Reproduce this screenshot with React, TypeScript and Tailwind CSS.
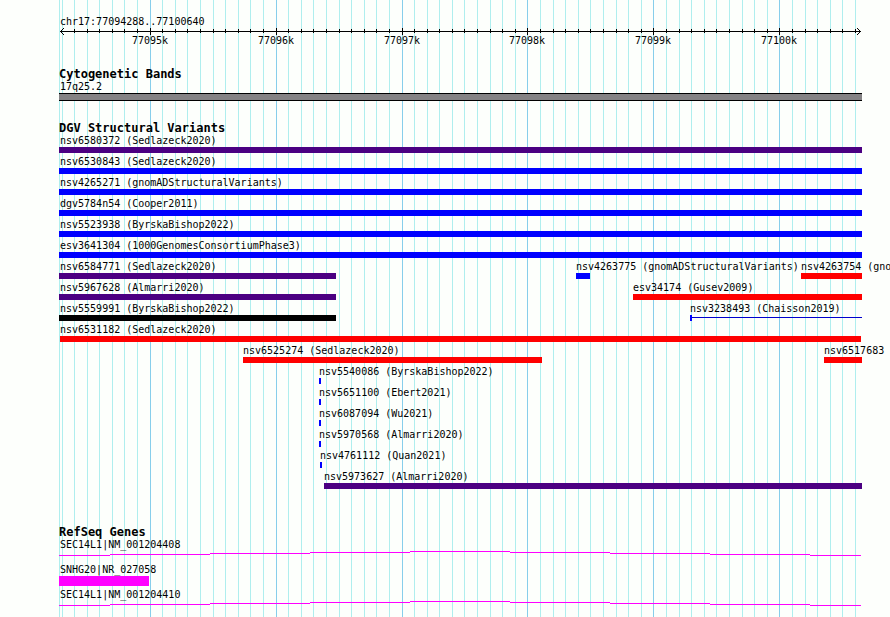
const ORIGIN = 59;
const SPAN = 803;
const at = (x: number) => `${((x - ORIGIN) / SPAN) * 100}%`;
const len = (w: number) => `${(w / SPAN) * 100}%`;

const MAJOR = [150, 276, 402, 527, 653, 779];
const MINOR = [
  62, 74, 87, 99, 112, 124, 137, 162, 175, 187, 200, 213, 225, 238, 250, 263, 288, 301, 313, 326,
  339, 351, 364, 376, 389, 414, 427, 439, 452, 464, 477, 490, 502, 515, 540, 553, 565, 578, 590,
  603, 616, 628, 641, 666, 679, 691, 704, 716, 729, 742, 754, 767, 792, 805, 817, 830, 842, 855,
];
const AXIS_LABELS = ["77095k", "77096k", "77097k", "77098k", "77099k", "77100k"];

type Feature = { label: string; start: number; end: number; color: string; line?: boolean };

const f = (label: string, start: number, end: number, color: string, line = false): Feature => ({
  label,
  start,
  end,
  color,
  line,
});

const INDIGO = "bg-[#4b0082]";
const BLUE = "bg-[#0000ff]";
const RED = "bg-[#ff0000]";
const BLACK = "bg-black";

const VARIANTS: Feature[][] = [
  [f("nsv6580372 (Sedlazeck2020)", 59, 862, INDIGO)],
  [f("nsv6530843 (Sedlazeck2020)", 59, 862, BLUE)],
  [f("nsv4265271 (gnomADStructuralVariants)", 59, 862, BLUE)],
  [f("dgv5784n54 (Cooper2011)", 59, 862, BLUE)],
  [f("nsv5523938 (ByrskaBishop2022)", 59, 862, BLUE)],
  [f("esv3641304 (1000GenomesConsortiumPhase3)", 59, 862, BLUE)],
  [
    f("nsv6584771 (Sedlazeck2020)", 59, 336, INDIGO),
    f("nsv4263775 (gnomADStructuralVariants)", 576, 590, BLUE),
    f("nsv4263754 (gno", 801, 862, RED),
  ],
  [f("nsv5967628 (Almarri2020)", 59, 336, INDIGO), f("esv34174 (Gusev2009)", 633, 862, RED)],
  [
    f("nsv5559991 (ByrskaBishop2022)", 59, 336, BLACK),
    f("nsv3238493 (Chaisson2019)", 690, 862, BLUE, true),
  ],
  [f("nsv6531182 (Sedlazeck2020)", 60, 861, RED)],
  [f("nsv6525274 (Sedlazeck2020)", 243, 542, RED), f("nsv6517683", 824, 862, RED)],
  [f("nsv5540086 (ByrskaBishop2022)", 319, 321, BLUE)],
  [f("nsv5651100 (Ebert2021)", 319, 321, BLUE)],
  [f("nsv6087094 (Wu2021)", 319, 321, BLUE)],
  [f("nsv5970568 (Almarri2020)", 319, 321, BLUE)],
  [f("nsv4761112 (Quan2021)", 320, 322, BLUE)],
  [f("nsv5973627 (Almarri2020)", 324, 862, INDIGO)],
];

// Each intron segment: start, end, vertical offset inside the 10px glyph row.
const INTRON: [number, number, number][] = [
  [59, 110, 4],
  [110, 210, 3],
  [210, 310, 2],
  [310, 410, 1],
  [410, 510, 0],
  [510, 610, 1],
  [610, 710, 2],
  [710, 810, 3],
  [810, 861, 4],
];

function Grid() {
  return (
    <svg
      className="absolute inset-0 h-full w-full"
      shapeRendering="crispEdges"
      aria-hidden="true"
    >
      {[ORIGIN, ...MINOR].map((x) => (
        <rect key={x} x={at(x)} y="0" width="1" height="100%" fill="#afeeee" />
      ))}
      {MAJOR.map((x) => (
        <rect key={x} x={at(x)} y="0" width="1" height="100%" fill="#87ceeb" />
      ))}
    </svg>
  );
}

function Axis() {
  return (
    <div>
      <p className="pl-px leading-3">chr17:77094288..77100640</p>
      <div className="flex px-px">
        <svg className="-mr-1 h-[7px] w-1 shrink-0" viewBox="0 0 4 7" shapeRendering="crispEdges" aria-hidden="true">
          <path d="M0 3h1v1H0zM1 2h1v1H1zM2 1h1v1H2zM3 0h1v1H3zM1 4h1v1H1zM2 5h1v1H2zM3 6h1v1H3z" />
        </svg>
        <div className="-mx-px h-[7px] min-w-0 flex-1">
          <svg className="h-full w-full" shapeRendering="crispEdges" aria-hidden="true">
            <rect x={at(60)} y="3" width={len(801)} height="1" />
            {MINOR.slice(1).map((x) => (
              <rect key={x} x={at(x)} y="1" width="1" height="4" />
            ))}
            {MAJOR.map((x) => (
              <rect key={x} x={at(x)} y="0" width="1" height="7" />
            ))}
          </svg>
        </div>
        <svg className="-ml-1 h-[7px] w-1 shrink-0" viewBox="0 0 4 7" shapeRendering="crispEdges" aria-hidden="true">
          <path d="M3 3h1v1H3zM2 2h1v1H2zM1 1h1v1H1zM0 0h1v1H0zM2 4h1v1H2zM1 5h1v1H1zM0 6h1v1H0z" />
        </svg>
      </div>
      <div className="grid">
        {AXIS_LABELS.map((label, i) => (
          <div
            key={label}
            className="col-start-1 row-start-1"
            style={{ paddingLeft: at(MAJOR[i]) }}
          >
            <span className="flex w-0 justify-center leading-3">{label}</span>
          </div>
        ))}
      </div>
    </div>
  );
}

function Heading({ children }: { children: string }) {
  return <h2 className="text-[12px] leading-[14px] font-bold">{children}</h2>;
}

function VariantGlyph({ feature }: { feature: Feature }) {
  const { label, start, end, color, line } = feature;
  return (
    <div className="col-start-1 row-start-1 min-w-0" style={{ paddingLeft: at(start) }}>
      <p className={start === ORIGIN ? "w-0 pl-px leading-3" : "w-0 leading-3"}>{label}</p>
      {line ? (
        <div className="flex h-1.5">
          <div className={`h-1.5 w-0.5 ${color}`} />
          <div className="mt-0.5 h-px flex-1 bg-[#0000cd]" />
        </div>
      ) : (
        <div
          className={`h-1.5 ${color}`}
          style={{ width: `${((end - start) / (ORIGIN + SPAN - start)) * 100}%` }}
        />
      )}
    </div>
  );
}

function Transcript({ label }: { label: string }) {
  return (
    <div>
      <p className="pl-px leading-3">{label}</p>
      <svg className="block h-2.5 w-full" shapeRendering="crispEdges" aria-hidden="true">
        {INTRON.map(([start, end, y]) => (
          <rect key={start} x={at(start)} y={y} width={len(end - start)} height="1" fill="#ff00ff" />
        ))}
      </svg>
    </div>
  );
}

export default function App() {
  return (
    <div className="flex min-h-screen overflow-hidden bg-[#fdfffc] pr-7 pl-[59px] font-['DejaVu_Sans_Mono',monospace] text-[10px] whitespace-nowrap text-black">
      <main className="relative min-w-0 flex-1">
        <Grid />
        <div className="relative pt-4">
          <Axis />

          <section className="mt-5">
            <Heading>Cytogenetic Bands</Heading>
            <p className="pl-px leading-3">17q25.2</p>
            <div className="h-2 border-y border-black bg-[#848284]" />
          </section>

          <section className="mt-5">
            <Heading>DGV Structural Variants</Heading>
            <div className="flex flex-col gap-[3px]">
              {VARIANTS.map((row) => (
                <div key={row[0].label} className="grid grid-cols-1">
                  {row.map((feature) => (
                    <VariantGlyph key={feature.label} feature={feature} />
                  ))}
                </div>
              ))}
            </div>
          </section>

          <section className="mt-9">
            <Heading>RefSeq Genes</Heading>
            <div className="flex flex-col gap-[3px]">
              <Transcript label="SEC14L1|NM_001204408" />
              <div>
                <p className="pl-px leading-3">SNHG20|NR_027058</p>
                <div className="h-2.5 bg-[#ff00ff]" style={{ width: len(90) }} />
              </div>
              <Transcript label="SEC14L1|NM_001204410" />
            </div>
          </section>
        </div>
      </main>
    </div>
  );
}
